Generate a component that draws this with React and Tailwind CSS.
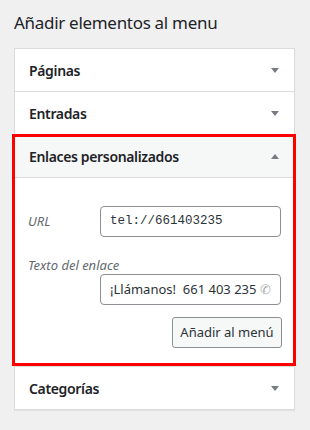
import React from "react";

const secciones = ["Páginas", "Entradas"];

function Flecha({ arriba = false }) {
  return (
    <svg width="8" height="5" viewBox="0 0 8 5" className="shrink-0">
      <polygon
        points={arriba ? "0,5 8,5 4,0" : "0,0 8,0 4,5"}
        fill="#787c82"
      />
    </svg>
  );
}

function Cabecera({ titulo, abierta = false }) {
  return (
    <div
      className={`flex h-[43px] items-center justify-between border-b border-[#dcdcde] pl-[14px] pr-[15px] ${
        abierta ? "bg-[#f6f7f7]" : "bg-white"
      }`}
    >
      <span className="text-[14px] font-semibold tracking-[-0.35px] text-[#1d2327]">{titulo}</span>
      <Flecha arriba={abierta} />
    </div>
  );
}

export default function App() {
  return (
    <div
      className="h-[430px] w-[310px] overflow-hidden bg-[#f0f0f1]"
      style={{ fontFamily: '"Noto Sans", "Open Sans", sans-serif' }}
    >
      <h2 className="px-[14px] pt-[9px] pb-[11px] text-[17px] leading-[28px] font-normal tracking-[-0.3px] text-[#1d2327]">
        Añadir elementos al menu
      </h2>

      <div className="ml-[14px] w-[281px] border border-[#dcdcde] bg-white shadow-[0_1px_1px_rgba(0,0,0,0.06)]">
        {secciones.map((s) => (
          <Cabecera key={s} titulo={s} />
        ))}

        <div className="relative border-b border-[#dcdcde]">
          <Cabecera titulo="Enlaces personalizados" abierta />
          <div className="h-[188px] pl-[13px] pr-[13px] pt-[28px]">
            <div className="flex items-center justify-between">
              <span className="text-[13px] italic text-[#646970]">URL</span>
              <div className="flex h-[31px] w-[181px] items-center rounded-[4px] border border-[#8c8f94] px-[9px] font-['Liberation_Mono',monospace] text-[12.5px] text-[#2c3338]">
                tel://661403235
              </div>
            </div>
            <div className="mt-[19px] text-[13px] leading-[18px] italic text-[#646970]">
              Texto del enlace
            </div>
            <div className="ml-auto flex h-[31px] w-[181px] items-center overflow-hidden whitespace-nowrap rounded-[4px] border border-[#8c8f94] px-[9px] text-[13px] text-[#2c3338]">
              <span className="block overflow-hidden">
                ¡Llámanos!&nbsp; 661 403 235 <span className="text-[#a7aaad]">✆</span>
              </span>
            </div>
            <div className="-mr-px mt-[12px] flex justify-end">
              <button className="h-[31px] w-[110px] rounded-[3px] border border-[#8c8f94] bg-[#f6f7f7] text-[13px] text-[#2c3338]">
                Añadir al menú
              </button>
            </div>
          </div>
          <div className="pointer-events-none absolute -top-px -left-[3px] -right-[2px] bottom-0 border-[3px] border-[#ff0000]" />
        </div>

        <div className="flex h-[42px] items-center justify-between pl-[14px] pr-[15px]">
          <span className="text-[14px] font-semibold tracking-[-0.35px] text-[#1d2327]">Categorías</span>
          <Flecha />
        </div>
      </div>
    </div>
  );
}
